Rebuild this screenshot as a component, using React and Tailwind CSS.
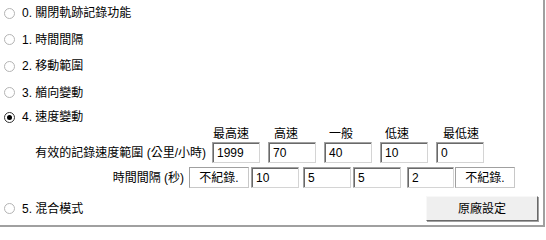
const modes = [
  { label: "0. 關閉軌跡記錄功能" },
  { label: "1. 時間間隔" },
  { label: "2. 移動範圍" },
  { label: "3. 艏向變動" },
];

function Radio({ checked }) {
  return (
    <span
      className={`flex h-[11px] w-[11px] shrink-0 items-center justify-center rounded-full border bg-white ${
        checked ? "border-[#333333]" : "border-[#b4b4b4]"
      }`}
    >
      {checked && <span className="h-[5px] w-[5px] rounded-full bg-black" />}
    </span>
  );
}

function Option({ label, checked, className = "" }) {
  return (
    <div className={`flex items-center gap-[7px] pl-[4px] ${className}`}>
      <Radio checked={checked} />
      <span>{label}</span>
    </div>
  );
}

function Edit({ value, className = "" }) {
  return (
    <div
      className={`flex h-[21px] items-center border border-[#d4d4d4] border-t-[#a0a0a0] border-l-[#a0a0a0] bg-white pl-[4px] shadow-[inset_1px_1px_0_#696969] ${className}`}
    >
      {value}
    </div>
  );
}

function Static({ value, className = "" }) {
  return (
    <div
      className={`flex h-[21px] items-center justify-center border border-[#c8c8c8] border-t-[#a0a0a0] border-l-[#a0a0a0] bg-white ${className}`}
    >
      {value}
    </div>
  );
}

export default function App() {
  const speeds = [
    { head: "最高速", value: "1999", pad: "pl-[1px]" },
    { head: "高速", value: "70", pad: "pl-[6px]" },
    { head: "一般", value: "40", pad: "pl-[5px]" },
    { head: "低速", value: "10", pad: "pl-[5px]" },
    { head: "最低速", value: "0", pad: "pl-[7px]" },
  ];

  return (
    <div
      className="h-[228px] w-[546px] bg-white text-[12px] text-black"
      style={{ fontFamily: '"Liberation Sans", "Noto Sans CJK TC", sans-serif' }}
    >
      <div className="flex h-[227px] w-[545px] flex-col border-r-2 border-b-2 border-[#a0a0a0]">
        {modes.map((m) => (
          <Option key={m.label} label={m.label} className="h-[26.5px]" />
        ))}
        <Option label="4. 速度變動" checked className="h-[22px]" />

        {/* speed headers */}
        <div className="flex h-[12px] items-center leading-[12px]">
          <div className="w-[212px]" />
          <div className="flex gap-[8px]">
            {speeds.map((s) => (
              <div key={s.head} className={`w-[48px] ${s.pad}`}>
                {s.head}
              </div>
            ))}
          </div>
        </div>

        {/* speed range */}
        <div className="mt-[2px] flex items-center">
          <div className="w-[212px] pr-[6px] text-right">有效的記錄速度範圍 (公里/小時)</div>
          <div className="flex gap-[8px]">
            {speeds.map((s) => (
              <Edit key={s.head} value={s.value} className="w-[48px]" />
            ))}
          </div>
        </div>

        {/* time interval */}
        <div className="mt-[4px] flex items-center">
          <div className="w-[189px] pr-[5px] text-right">時間間隔 (秒)</div>
          <Static value="不紀錄." className="w-[60px]" />
          <Edit value="10" className="ml-[2px] w-[48px]" />
          <Edit value="5" className="ml-[4px] w-[48px]" />
          <Edit value="5" className="ml-[2px] w-[48px]" />
          <Edit value="2" className="ml-[6px] w-[47px]" />
          <Static value="不紀錄." className="ml-[1px] w-[60px]" />
        </div>

        <div className="mt-[8px] flex items-center justify-between pr-[5px]">
          <Option label="5. 混合模式" />
          <button className="h-[25px] w-[112px] border border-[#f8f8f8] border-r-[#696969] border-b-[#696969] bg-[#efefef] shadow-[1px_1px_0_#a0a0a0]">
            原廠設定
          </button>
        </div>
      </div>
    </div>
  );
}
